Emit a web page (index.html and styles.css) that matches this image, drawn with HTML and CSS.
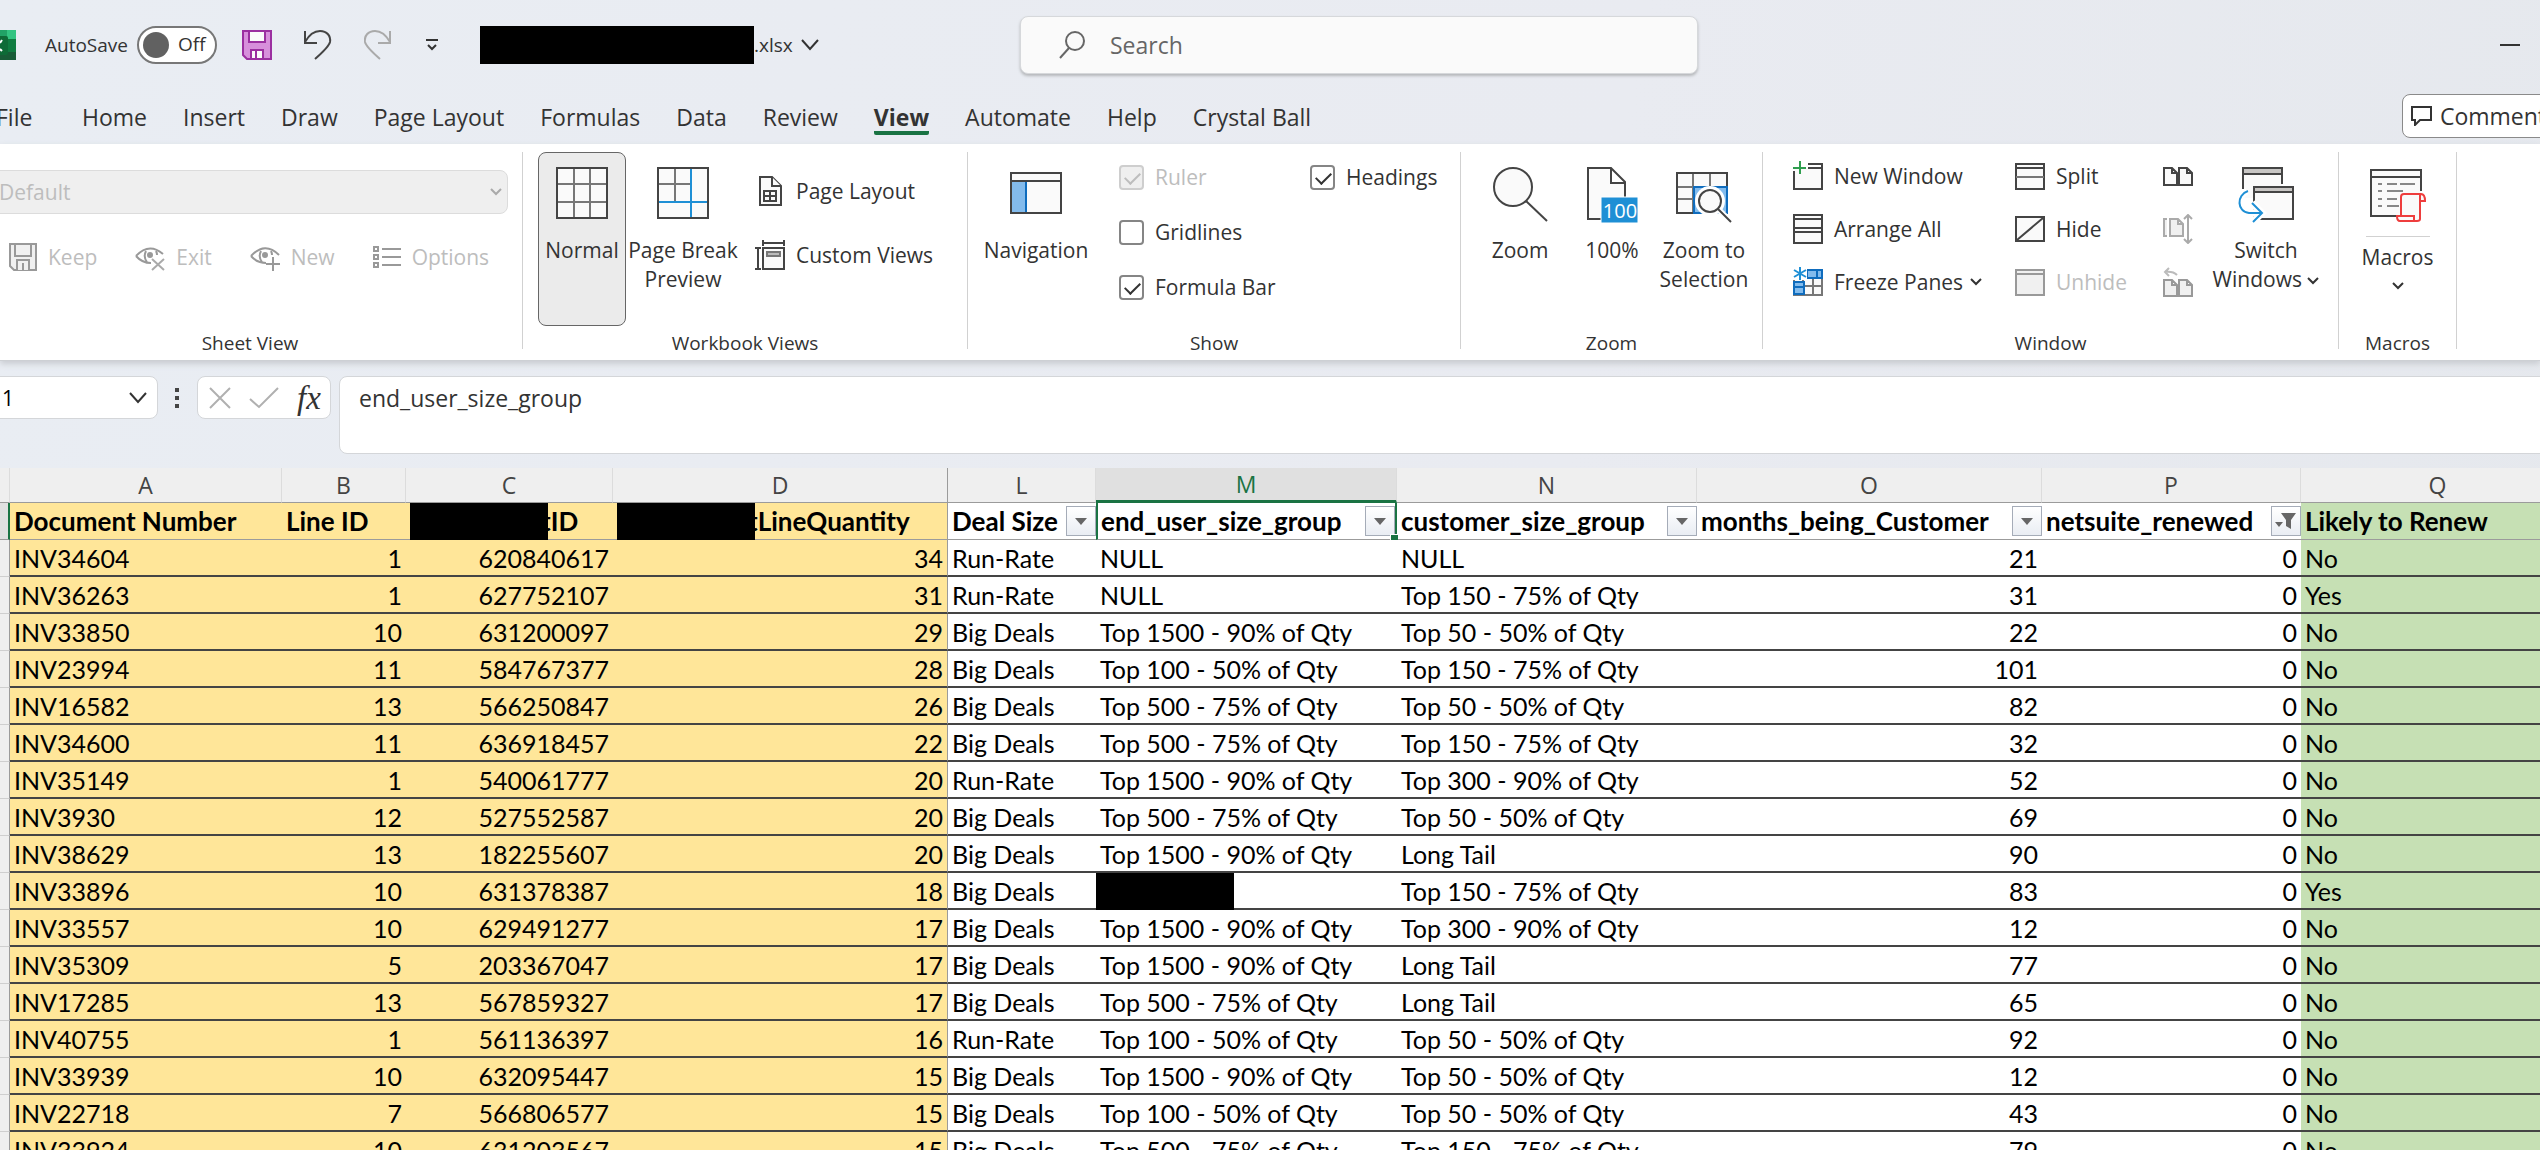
FILE: index.html
```html
<!DOCTYPE html>
<html lang="en">
<head>
    <meta charset="UTF-8" />
    <meta name="viewport" content="width=device-width, initial-scale=1" />
    <title>Excel - View</title>
    <link rel="stylesheet" href="styles.css">
</head>
<body>
<div class="app">

    <!-- title bar -->
    <header class="titlebar">
        <div class="title-left">
            <svg class="logo" width="16" height="30" viewBox="0 0 16 30"><path fill="#21a366" d="M0 0h16v10H0z"/><path fill="#33c481" d="M7 0h9v9H7z"/><path fill="#107c41" d="M0 9h16v21H0z"/><path fill="#185c37" d="M0 22h16v8H0z"/><path fill="#0e6b37" d="M0 6h6q2 0 2 2v15q0 2-2 2H0z"/><path stroke="#fff" stroke-width="2" d="M0 19L2 21M0 13L2 10"/></svg>
            <label class="autosave" for="autosave">AutoSave</label>
            <span class="toggle"><input type="checkbox" id="autosave"><span class="toggle-text">Off</span></span>
            <div class="quick">
                <button aria-label="Save"><svg width="30" height="30" viewBox="0 0 30 30"><path fill="#d78fdb" stroke="#9b2fa0" stroke-width="2" d="M1 1h28v28H5l-4-4z"/><path fill="#fafafa" stroke="#9b2fa0" stroke-width="2" d="M7 1h16v11H7zM9 29v-9h12v9zM14 20v9"/></svg></button>
                <button aria-label="Undo"><svg width="30" height="30" viewBox="0 0 30 30" fill="none" stroke="#444" stroke-width="2"><path d="M2 1v12h12M2 12C6 5 11 1 17 1c7 0 11 5 10 11-1 4-7 10-15 17"/></svg></button>
                <button aria-label="Redo"><svg width="30" height="30" viewBox="0 0 30 30" fill="none" stroke="#aaa" stroke-width="2"><path d="M26 1v12H14M26 12C22 5 17 1 11 1 4 1 0 6 1 12c1 4 7 10 15 17"/></svg></button>
                <button aria-label="Customize"><svg width="14" height="14" viewBox="0 0 14 14" fill="none" stroke="#333" stroke-width="2"><path d="M1 2h12M3 7l4 4 4-4"/></svg></button>
            </div>
            <div class="filename"><span class="redacted"></span>.xlsx
                <svg width="18" height="12" viewBox="0 0 18 12" fill="none" stroke="#333" stroke-width="2"><path d="M1 1l8 9 8-9"/></svg>
            </div>
        </div>
        <div class="search">
            <svg width="26" height="28" viewBox="0 0 26 28" fill="none" stroke="#666" stroke-width="2"><circle cx="16" cy="10" r="9"/><path d="M10 17L1 27"/></svg>
            <input type="text" placeholder="Search" aria-label="Search">
        </div>
        <button class="minimize" aria-label="Minimize"></button>
    </header>

    <nav class="tabs">
        <a href="#" class="file">File</a>
        <a href="#">Home</a>
        <a href="#">Insert</a>
        <a href="#">Draw</a>
        <a href="#">Page Layout</a>
        <a href="#">Formulas</a>
        <a href="#">Data</a>
        <a href="#">Review</a>
        <a href="#" class="active">View</a>
        <a href="#">Automate</a>
        <a href="#">Help</a>
        <a href="#">Crystal Ball</a>
        <button class="comments"><svg width="21" height="20" viewBox="0 0 21 20" fill="none" stroke="#333" stroke-width="2"><path d="M1 1h19v13H9l-5 5v-5H1z"/></svg>Comments</button>
    </nav>

    <!-- ribbon -->
    <section class="ribbon">
        <div class="group sheet-view">
            <div class="group-body">
                <div class="view-select">
                    <select disabled aria-label="Sheet view"><option>Default</option></select>
                    <svg width="12" height="8" viewBox="0 0 12 8" fill="none" stroke="#aaa" stroke-width="2"><path d="M1 1l5 5 5-5"/></svg>
                </div>
                <div class="view-actions">
                    <button class="small" disabled><svg width="28" height="28" viewBox="0 0 28 28" fill="#f0f0f0" stroke="#999" stroke-width="2"><path d="M1 1h26v26H5l-4-4z"/><path d="M6 1h16v12H6zM8 27V17h12v10M14 20v7"/></svg>Keep</button>
                    <button class="small" disabled><svg width="30" height="28" viewBox="0 0 30 28" fill="none" stroke="#999" stroke-width="2"><path d="M1 13Q14-1 28 11M1 13q6 7 15 7"/><path d="M11 8q-3 6 1 11M21 8q1 2 1 4"/><circle cx="15" cy="12" r="2" fill="#999"/><path stroke="#aaa" d="M17 16l12 11M29 16L17 27"/></svg>Exit</button>
                    <button class="small" disabled><svg width="30" height="28" viewBox="0 0 30 28" fill="none" stroke="#999" stroke-width="2"><path d="M1 13Q15-2 29 12M1 13q6 7 15 7"/><path d="M11 8q-3 6 1 11M21 8q1 2 1 4"/><circle cx="15" cy="12" r="2" fill="#999"/><path d="M23 14v14M16 21h14"/></svg>New</button>
                    <button class="small" disabled><svg width="28" height="24" viewBox="0 0 28 24" fill="none" stroke="#999" stroke-width="2"><path d="M1 2h4v4H1zM1 10h4v4H1zM1 18h4v4H1zM9 4h19M9 12h19M9 20h19"/></svg>Options</button>
                </div>
            </div>
            <div class="group-label">Sheet View</div>
        </div>

        <div class="group workbook-views">
            <div class="group-body">
                <button class="large selected">
                    <svg width="52" height="56" viewBox="0 0 52 56" fill="none"><path fill="#fafafa" d="M1 1h50v50H1z"/><path stroke="#777" stroke-width="2" d="M18 1v50M34 1v50M1 17h50M1 35h50"/><path stroke="#444" stroke-width="2" d="M1 1h50v50H1z"/></svg>
                    Normal
                </button>
                <button class="large">
                    <svg width="52" height="56" viewBox="0 0 52 56" fill="none"><path fill="#fafafa" d="M1 1h50v50H1z"/><path stroke="#777" stroke-width="2" d="M18 1v33M1 17h33"/><path stroke="#444" stroke-width="2" d="M1 1h50v50H1z"/><path stroke="#1e8fd5" stroke-width="2" d="M34 2v48M2 35h48"/></svg>
                    Page Break<br>Preview
                </button>
                <div class="stack">
                    <button class="small"><svg width="30" height="30" viewBox="0 0 30 30" fill="#fafafa" stroke="#444" stroke-width="2"><path d="M5 1h12l9 9v19H5z"/><path d="M17 1v9h9M9 15h12v10H9zM15 15v10M9 20h12"/></svg>Page Layout</button>
                    <button class="small"><svg width="30" height="30" viewBox="0 0 30 30" fill="#fafafa" stroke="#444" stroke-width="2"><path d="M8 8h21v21H8zM8 3h21M8 0v6M29 0v6M3 8v21M0 8h6M0 29h6"/><path fill="#bbb" stroke="#777" d="M12 12h13v4H12z"/></svg>Custom Views</button>
                </div>
            </div>
            <div class="group-label">Workbook Views</div>
        </div>

        <div class="group show">
            <div class="group-body">
                <button class="large">
                    <svg width="52" height="56" viewBox="0 0 52 56"><path fill="#fafafa" d="M1 6h50v40H1z"/><path fill="#83bbec" d="M2 15h14v31H2z"/><path stroke="#0f6cbd" stroke-width="2" d="M16 15v30"/><path fill="none" stroke="#444" stroke-width="2" d="M1 6h50v40H1zM1 14h50"/></svg>
                    Navigation
                </button>
                <div class="checks">
                    <label class="off"><input type="checkbox" checked disabled>Ruler</label>
                    <label><input type="checkbox" checked>Headings</label>
                    <label><input type="checkbox">Gridlines</label>
                    <span></span>
                    <label><input type="checkbox" checked>Formula Bar</label>
                </div>
            </div>
            <div class="group-label">Show</div>
        </div>

        <div class="group zoom">
            <div class="group-body">
                <button class="large">
                    <svg width="56" height="56" viewBox="0 0 56 56" stroke="#444" stroke-width="2"><circle fill="#fafafa" cx="21" cy="20" r="19"/><path d="M34 34l21 20"/></svg>
                    Zoom
                </button>
                <button class="large">
                    <svg width="52" height="56" viewBox="0 0 52 56"><path fill="#fafafa" stroke="#444" stroke-width="2" d="M2 1h23l14 14v37H2zM25 1v15h14"/><path fill="#1e8fd5" stroke="#fff" d="M15 30h37v26H15z"/><text x="34" y="51" text-anchor="middle" class="badge-text">100</text></svg>
                    100%
                </button>
                <button class="large">
                    <svg width="56" height="56" viewBox="0 0 56 56" fill="none"><path fill="#fafafa" stroke="#777" stroke-width="2" d="M1 6h50v40H1zM17 6v40M34 6v40M1 20h50M1 32h50"/><path stroke="#444" stroke-width="2" d="M51 20V6H1v40h18"/><path fill="#83bbec" stroke="#0f6cbd" stroke-width="2" d="M18 20h33v26H18z"/><circle cx="34" cy="34" r="15" fill="#fff"/><path stroke="#fff" stroke-width="6" d="M42 42l13 13"/><circle cx="34" cy="34" r="11" fill="#fafafa" stroke="#444" stroke-width="2"/><path stroke="#444" stroke-width="2" d="M42 42l13 13"/></svg>
                    Zoom to<br>Selection
                </button>
            </div>
            <div class="group-label">Zoom</div>
        </div>

        <div class="group window">
            <div class="group-body">
                <div class="window-grid">
                    <button class="small"><svg width="30" height="30" viewBox="0 0 30 30" fill="none" stroke="#444" stroke-width="2"><path fill="#fafafa" stroke="none" d="M1 7h28v21H1z"/><path d="M15 3h14v25H1V10M15 7h14"/><path stroke="#2f9e4f" d="M0 7h13M7 0v13"/></svg>New Window</button>
                    <button class="small"><svg width="30" height="30" viewBox="0 0 30 30" fill="#fafafa" stroke="#444" stroke-width="2"><path d="M1 3h28v25H1zM1 7h28"/><path stroke="#777" d="M1 16h28"/></svg>Split</button>
                    <button class="small" aria-label="View Side by Side"><svg width="30" height="30" viewBox="0 0 30 30" fill="#fafafa" stroke="#444" stroke-width="2"><path d="M1 7h8l5 5v12H1zM16 7h8l5 5v12H16zM9 7v5h5M24 7v5h5"/></svg></button>
                    <button class="small"><svg width="30" height="30" viewBox="0 0 30 30" fill="#fafafa" stroke="#444" stroke-width="2"><path d="M1 1h28v28H1zM1 5h28M1 14h28M1 18h28"/></svg>Arrange All</button>
                    <button class="small"><svg width="30" height="30" viewBox="0 0 30 30" fill="#fafafa" stroke="#444" stroke-width="2"><path d="M1 3h28v24H1zM2 26L28 4"/></svg>Hide</button>
                    <button class="small" disabled aria-label="Synchronous Scrolling"><svg width="30" height="30" viewBox="0 0 30 30" fill="#f0f0f0" stroke="#aaa" stroke-width="2"><path d="M7 5h8l5 5v12H7zM15 5v5h5M4 5H1v17h3"/><path fill="none" d="M25 1v28M21 5l4-4 4 4M21 25l4 4 4-4"/></svg></button>
                    <button class="small"><svg width="30" height="30" viewBox="0 0 30 30" stroke-width="2"><path fill="#fafafa" stroke="#777" d="M1 3h28v25H1zM10 11v17M20 11v17M1 19h28"/><path fill="#83bbec" stroke="#0f6cbd" d="M14 3h15v8H14zM24 3v8M1 15h10v12H1zM1 20h10"/><path fill="#fff" d="M0 0h14v13H0z"/><path stroke="#1e8fd5" d="M7 0v13M1 3l12 7M13 3L1 10"/></svg>Freeze Panes <svg class="chevron" width="12" height="8" viewBox="0 0 12 8"><path d="M1 1l5 5 5-5"/></svg></button>
                    <button class="small" disabled><svg width="30" height="30" viewBox="0 0 30 30" fill="#f0f0f0" stroke="#999" stroke-width="2"><path d="M1 3h28v25H1zM1 7h28"/></svg>Unhide</button>
                    <button class="small" disabled aria-label="Reset Window Position"><svg width="30" height="30" viewBox="0 0 30 30" fill="#f0f0f0" stroke="#999" stroke-width="2"><path d="M1 13h8l5 5v11H1zM16 13h8l5 5v11H16zM9 13v5h5M24 13v5h5"/><path fill="none" stroke="#bbb" d="M14 8Q10 4 2 5M6 1L2 5l4 4"/></svg></button>
                </div>
                <button class="large">
                    <svg width="56" height="56" viewBox="0 0 56 56" fill="#fafafa" stroke="#444" stroke-width="2"><path stroke="none" d="M5 1h39v30H5z"/><path fill="#c8c6c4" d="M5 1h39v6H5z"/><path fill="none" d="M5 22V1h39v16"/><path d="M16 20h39v32H16z"/><path fill="#c8c6c4" d="M16 20h39v5H16z"/><path fill="none" stroke="#fff" stroke-width="7" d="M9 24C-2 30-1 45 11 46h12M14 36l10 10-9 9"/><path fill="none" stroke="#1e8fd5" d="M10 24C-2 28-1 45 11 46h12M14 36l10 10-9 9"/></svg>
                    Switch<br><span>Windows <svg class="chevron" width="12" height="8" viewBox="0 0 12 8"><path d="M1 1l5 5 5-5"/></svg></span>
                </button>
            </div>
            <div class="group-label">Window</div>
        </div>

        <div class="group macros">
            <div class="group-body">
                <button class="large">
                    <svg width="56" height="56" viewBox="0 0 56 56" fill="none" stroke="#444" stroke-width="2"><path fill="#fafafa" stroke="none" d="M1 3h50v46H1z"/><path d="M51 24V3H1v46h26M1 10h50"/><path stroke="#888" d="M8 17h4M17 17h10M30 17h15M8 24h4M17 24h16M8 32h4M17 32h10M8 39h4M17 39h12"/><path fill="#fafafa" stroke="#ee3d3d" d="M31 49V30q0-3 3-3h17q4 0 4 7h-5v18q0 2-3 2H30q-3 0-3-5h17v5M50 34v-7"/></svg>
                    <span class="split-line"></span>
                    Macros
                    <svg class="chevron" width="12" height="8" viewBox="0 0 12 8"><path d="M1 1l5 5 5-5"/></svg>
                </button>
            </div>
            <div class="group-label">Macros</div>
        </div>
    </section>

    <!-- formula bar -->
    <section class="formula-bar">
        <div class="name-box">
            <input type="text" value="1" aria-label="Name box">
            <svg width="18" height="12" viewBox="0 0 18 12" fill="none" stroke="#333" stroke-width="2"><path d="M1 1l8 9 8-9"/></svg>
        </div>
        <svg class="dots" width="4" height="20" viewBox="0 0 4 20" fill="#444"><path d="M0 0h4v4H0zM0 8h4v4H0zM0 16h4v4H0z"/></svg>
        <div class="formula-buttons">
            <button aria-label="Cancel"><svg width="22" height="22" viewBox="0 0 22 22" stroke="#b0b0b0" stroke-width="2"><path d="M1 1l20 20M21 1L1 21"/></svg></button>
            <button aria-label="Enter"><svg width="30" height="22" viewBox="0 0 30 22" fill="none" stroke="#b0b0b0" stroke-width="2"><path d="M1 12l9 8L29 1"/></svg></button>
            <button class="fx">fx</button>
        </div>
        <textarea class="formula" aria-label="Formula">end_user_size_group</textarea>
    </section>

    <!-- grid -->
    <main class="sheet">
        <table>
            <colgroup>
                <col class="c-row"><col class="c-a"><col class="c-b"><col class="c-c"><col class="c-d"><col class="c-l"><col class="c-m"><col class="c-n"><col class="c-o"><col class="c-p"><col class="c-q">
            </colgroup>
            <thead>
                <tr>
                    <th class="corner"></th><th>A</th><th>B</th><th>C</th><th>D</th><th>L</th><th class="current">M</th><th>N</th><th>O</th><th>P</th><th>Q</th>
                </tr>
            </thead>
            <tbody>
                <tr class="titles">
                    <td></td>
                    <td>Document Number</td>
                    <td>Line ID</td>
                    <td><div class="cell"><span class="redacted"></span>tID</div></td>
                    <td><div class="cell"><span class="redacted"></span>tLineQuantity</div></td>
                    <td><div class="cell">Deal Size<button class="filter" aria-label="Filter"></button></div></td>
                    <td class="current"><div class="cell">end_user_size_group<button class="filter" aria-label="Filter"></button></div></td>
                    <td><div class="cell">customer_size_group<button class="filter" aria-label="Filter"></button></div></td>
                    <td><div class="cell">months_being_Customer<button class="filter" aria-label="Filter"></button></div></td>
                    <td><div class="cell">netsuite_renewed<button class="filter on" aria-label="Filter"><svg width="22" height="18" viewBox="0 0 22 18" fill="#666"><path d="M6 1h15l-5 7v9l-5-3V8zM0 10h8l-4 5z"/></svg></button></div></td>
                    <td>Likely to Renew</td>
                </tr>
                <tr><td></td><td>INV34604</td><td>1</td><td>620840617</td><td>34</td><td>Run-Rate</td><td>NULL</td><td>NULL</td><td>21</td><td>0</td><td>No</td></tr>
                <tr><td></td><td>INV36263</td><td>1</td><td>627752107</td><td>31</td><td>Run-Rate</td><td>NULL</td><td>Top 150 - 75% of Qty</td><td>31</td><td>0</td><td>Yes</td></tr>
                <tr><td></td><td>INV33850</td><td>10</td><td>631200097</td><td>29</td><td>Big Deals</td><td>Top 1500 - 90% of Qty</td><td>Top 50 - 50% of Qty</td><td>22</td><td>0</td><td>No</td></tr>
                <tr><td></td><td>INV23994</td><td>11</td><td>584767377</td><td>28</td><td>Big Deals</td><td>Top 100 - 50% of Qty</td><td>Top 150 - 75% of Qty</td><td>101</td><td>0</td><td>No</td></tr>
                <tr><td></td><td>INV16582</td><td>13</td><td>566250847</td><td>26</td><td>Big Deals</td><td>Top 500 - 75% of Qty</td><td>Top 50 - 50% of Qty</td><td>82</td><td>0</td><td>No</td></tr>
                <tr><td></td><td>INV34600</td><td>11</td><td>636918457</td><td>22</td><td>Big Deals</td><td>Top 500 - 75% of Qty</td><td>Top 150 - 75% of Qty</td><td>32</td><td>0</td><td>No</td></tr>
                <tr><td></td><td>INV35149</td><td>1</td><td>540061777</td><td>20</td><td>Run-Rate</td><td>Top 1500 - 90% of Qty</td><td>Top 300 - 90% of Qty</td><td>52</td><td>0</td><td>No</td></tr>
                <tr><td></td><td>INV3930</td><td>12</td><td>527552587</td><td>20</td><td>Big Deals</td><td>Top 500 - 75% of Qty</td><td>Top 50 - 50% of Qty</td><td>69</td><td>0</td><td>No</td></tr>
                <tr><td></td><td>INV38629</td><td>13</td><td>182255607</td><td>20</td><td>Big Deals</td><td>Top 1500 - 90% of Qty</td><td>Long Tail</td><td>90</td><td>0</td><td>No</td></tr>
                <tr><td></td><td>INV33896</td><td>10</td><td>631378387</td><td>18</td><td>Big Deals</td><td class="hidden-value"><span class="redacted"></span></td><td>Top 150 - 75% of Qty</td><td>83</td><td>0</td><td>Yes</td></tr>
                <tr><td></td><td>INV33557</td><td>10</td><td>629491277</td><td>17</td><td>Big Deals</td><td>Top 1500 - 90% of Qty</td><td>Top 300 - 90% of Qty</td><td>12</td><td>0</td><td>No</td></tr>
                <tr><td></td><td>INV35309</td><td>5</td><td>203367047</td><td>17</td><td>Big Deals</td><td>Top 1500 - 90% of Qty</td><td>Long Tail</td><td>77</td><td>0</td><td>No</td></tr>
                <tr><td></td><td>INV17285</td><td>13</td><td>567859327</td><td>17</td><td>Big Deals</td><td>Top 500 - 75% of Qty</td><td>Long Tail</td><td>65</td><td>0</td><td>No</td></tr>
                <tr><td></td><td>INV40755</td><td>1</td><td>561136397</td><td>16</td><td>Run-Rate</td><td>Top 100 - 50% of Qty</td><td>Top 50 - 50% of Qty</td><td>92</td><td>0</td><td>No</td></tr>
                <tr><td></td><td>INV33939</td><td>10</td><td>632095447</td><td>15</td><td>Big Deals</td><td>Top 1500 - 90% of Qty</td><td>Top 50 - 50% of Qty</td><td>12</td><td>0</td><td>No</td></tr>
                <tr><td></td><td>INV22718</td><td>7</td><td>566806577</td><td>15</td><td>Big Deals</td><td>Top 100 - 50% of Qty</td><td>Top 50 - 50% of Qty</td><td>43</td><td>0</td><td>No</td></tr>
                <tr><td></td><td>INV33924</td><td>10</td><td>631203567</td><td>15</td><td>Big Deals</td><td>Top 500 - 75% of Qty</td><td>Top 150 - 75% of Qty</td><td>79</td><td>0</td><td>No</td></tr>
            </tbody>
        </table>
    </main>

</div>
</body>
</html>
```
FILE: styles.css
```css
* {
    box-sizing: border-box;
}

body {
    margin: 0;
    font-family: "Open Sans", "Noto Sans", sans-serif;
    font-size: 21px;
    color: #333;
    background: #e9ecf2;
}

button {
    font: inherit;
    color: inherit;
    background: none;
    border: none;
    padding: 0;
}

svg {
    display: block;
    flex: none;
}

.app {
    height: 100vh;
    overflow: hidden;
    display: flex;
    flex-direction: column;
    background: linear-gradient(100deg, #e9edf3, #e9ebf1 60%, #e5e8ed);
}

/* title bar */
.titlebar {
    flex: none;
    height: 90px;
    display: grid;
    grid-template-columns: 1020fr 678fr 842fr;
    align-items: center;
}

.title-left {
    display: flex;
    align-items: center;
    white-space: nowrap;
}

.autosave {
    width: 92px;
    margin-left: 29px;
    font-size: 19px;
}

.toggle {
    position: relative;
    width: 80px;
    height: 38px;
}

.toggle input {
    appearance: none;
    margin: 0;
    width: 80px;
    height: 38px;
    background: #fff;
    border: 2px solid #777;
    border-radius: 19px;
}

.toggle input::before {
    content: "";
    display: block;
    width: 26px;
    height: 26px;
    margin: 4px;
    border-radius: 50%;
    background: #616161;
}

.toggle-text {
    position: absolute;
    left: 41px;
    top: 5px;
    font-size: 19px;
    pointer-events: none;
}

.quick {
    display: flex;
    align-items: center;
    gap: 31px;
    margin-left: 25px;
}

.redacted {
    display: inline-block;
    flex: none;
    width: 138px;
    height: 38px;
    background: #000;
}

.filename {
    display: flex;
    align-items: center;
    margin-left: 41px;
    font-size: 19px;
}

.filename .redacted {
    width: 274px;
}

.filename svg {
    margin-left: 8px;
}

.search {
    display: flex;
    align-items: center;
    gap: 23px;
    height: 58px;
    padding-left: 38px;
    background: #fafafa;
    border: 1px solid #d6d8db;
    border-radius: 8px;
    box-shadow: 0 2px 3px #b5b7ba;
}

.search input {
    flex: 1;
    border: none;
    background: none;
    font: inherit;
    font-size: 23px;
}

.search input::placeholder {
    color: #666;
}

.minimize {
    justify-self: end;
    width: 20px;
    height: 2px;
    margin-right: 20px;
    background: #333;
}

/* tabs */
.tabs {
    flex: none;
    height: 54px;
    display: flex;
    align-items: flex-start;
    gap: 36px;
    white-space: nowrap;
    font-size: 23px;
    line-height: 28px;
}

.tabs a {
    margin-top: 13px;
    color: #333;
    text-decoration: none;
}

.tabs .file {
    width: 46px;
    text-indent: -4px;
}

.tabs .active {
    font-weight: 700;
    border-bottom: 4px solid #1a7343;
    border-radius: 2px;
}

.comments {
    display: flex;
    align-items: center;
    gap: 8px;
    height: 44px;
    margin: 4px -42px 0 auto;
    padding: 0 24px 0 8px;
    background: #fff;
    border: 1px solid #8a8a8a;
    border-radius: 8px;
}

/* ribbon */
.ribbon {
    flex: none;
    height: 217px;
    display: flex;
    padding: 8px 0 11px;
    background: #fff;
    border-bottom: 1px solid #cdd0d4;
    box-shadow: 0 3px 6px #c9ccd1;
    line-height: 29px;
    white-space: nowrap;
}

.group {
    flex: none;
    display: flex;
    flex-direction: column;
    border-right: 1px solid #d1d1d1;
}

.group-body {
    flex: 1;
    display: flex;
    align-items: flex-start;
}

.group-label {
    font-size: 19px;
    line-height: 12px;
    text-align: center;
}

/* the first group runs past the left edge of the window */
.sheet-view {
    width: 545px;
    margin-left: -22px;
}

.workbook-views {
    width: 445px;
}

.show {
    width: 493px;
}

.zoom {
    width: 302px;
}

.window {
    width: 576px;
}

.macros {
    width: 118px;
}

.large {
    display: flex;
    flex-direction: column;
    align-items: center;
    height: 174px;
    padding-top: 15px;
    text-align: center;
}

.large > svg:first-child {
    margin-bottom: 13px;
}

.large span svg {
    display: inline-block;
    vertical-align: middle;
}

.chevron {
    fill: none;
    stroke: #333;
    stroke-width: 2px;
}

.small {
    display: flex;
    align-items: center;
    gap: 11px;
    height: 30px;
}

.small:disabled {
    color: #bdbdbd;
}

.small .chevron {
    margin-left: -4px;
}

.sheet-view .group-body {
    flex-direction: column;
}

.view-select {
    display: flex;
    align-items: center;
    width: 518px;
    height: 44px;
    margin: 18px 0 28px 12px;
    padding-right: 5px;
    background: #efefef;
    border: 1px solid #dcdcdc;
    border-radius: 8px;
}

.view-select select {
    flex: 1;
    appearance: none;
    border: none;
    background: none;
    padding: 0 8px;
    font: inherit;
    color: #bdbdbd;
    opacity: 1;
}

.view-actions {
    display: flex;
    gap: 38px;
    padding-left: 31px;
}

.workbook-views .group-body {
    padding-left: 15px;
}

.workbook-views .large {
    width: 114px;
}

.workbook-views .selected {
    width: 88px;
    background: #ebebeb;
    border: 1px solid #666;
    border-radius: 8px;
    padding-top: 14px;
}

.stack {
    display: flex;
    flex-direction: column;
    gap: 34px;
    padding: 24px 0 0 15px;
}

.show .group-body {
    padding-left: 10px;
}

.show .large {
    width: 116px;
}

.checks {
    display: grid;
    grid-template-columns: 191px auto;
    row-gap: 26px;
    padding: 11px 0 0 25px;
}

.checks label {
    display: flex;
    align-items: center;
    gap: 11px;
}

.checks .off {
    color: #bdbdbd;
}

.checks input {
    appearance: none;
    width: 25px;
    height: 25px;
    margin: 0;
    border: 2px solid #858585;
    border-radius: 4px;
    background: #fff;
}

.checks input:checked::before {
    content: "";
    display: block;
    width: 13px;
    height: 7px;
    margin: 5px 4px;
    border: solid #333;
    border-width: 0 0 2px 2px;
    transform: rotate(-45deg);
}

.checks input:disabled {
    background: #efefef;
    border-color: #cecece;
}

.checks input:disabled::before {
    border-color: #bdbdbd;
}

.zoom .group-body {
    padding-left: 13px;
}

.zoom .large {
    width: 92px;
}

.badge-text {
    fill: #fff;
    font-size: 20px;
}

.window .group-body {
    padding-left: 30px;
}

.window-grid {
    display: grid;
    grid-template-columns: 222px 148px 32px;
    row-gap: 23px;
    padding-top: 9px;
}

.window .large {
    width: 142px;
}

.macros .large {
    width: 117px;
}

.split-line {
    width: 64px;
    height: 1px;
    margin-bottom: 6px;
    background: #d1d1d1;
}

.macros .chevron {
    margin-top: 10px;
}

/* formula bar */
.formula-bar {
    flex: none;
    display: flex;
    align-items: flex-start;
    height: 107px;
    padding-top: 15px;
}

.name-box,
.formula-buttons {
    display: flex;
    align-items: center;
    height: 43px;
    background: #fff;
    border: 1px solid #d4d6d9;
    border-radius: 8px;
}

.name-box {
    width: 168px;
    margin-left: -10px;
    padding: 0 10px;
}

.name-box input {
    flex: 1;
    min-width: 0;
    border: none;
    padding: 0 1px;
    font: inherit;
}

.dots {
    margin: 12px 18px 0 17px;
}

.formula-buttons {
    width: 134px;
    padding-left: 11px;
    gap: 18px;
}

.fx {
    font-family: "Liberation Serif", serif;
    font-style: italic;
    font-size: 33px;
    line-height: 36px;
}

.formula {
    flex: 1;
    height: 78px;
    margin: 0 -10px 0 8px;
    padding: 6px 19px;
    border: 1px solid #d4d6d9;
    border-radius: 8px;
    background: #fff;
    color: #333;
    font: inherit;
    font-size: 23px;
    line-height: 30px;
    resize: none;
}

/* grid */
.sheet {
    flex: 1;
    min-height: 0;
    overflow: hidden;
    background: #fff;
}

.sheet table {
    width: 2575px;
    table-layout: fixed;
    border-collapse: separate;
    border-spacing: 0;
    font-family: Lato, sans-serif;
    font-size: 25px;
    line-height: 34px;
    color: #000;
    white-space: nowrap;
}

.c-row { width: 10px; }
.c-a { width: 272px; }
.c-b { width: 124px; }
.c-c { width: 207px; }
.c-d { width: 335px; }
.c-l { width: 148px; }
.c-m { width: 301px; }
.c-n { width: 300px; }
.c-o { width: 345px; }
.c-p { width: 259px; }
.c-q { width: 274px; }

.sheet th {
    height: 35px;
    padding: 0;
    background: #efefef;
    border-right: 1px solid #dcdcdc;
    border-bottom: 1px solid #9b9b9b;
    font-family: "Open Sans", sans-serif;
    font-size: 23px;
    font-weight: 400;
    line-height: 34px;
    color: #444;
}

.sheet th:nth-child(5) {
    border-right-color: #9b9b9b;
}

.sheet th.current {
    background: #e0e0e0;
    border-bottom: 3px solid #1a7343;
    line-height: 32px;
    color: #1a7343;
}

.sheet td {
    height: 37px;
    padding: 0 4px;
    border-bottom: 2px solid #444;
}

.sheet td:first-child {
    background: #efefef;
    border-right: 1px solid #9b9b9b;
    border-bottom: 1px solid #cfcfcf;
    padding: 0;
}

.sheet td:nth-child(2),
.sheet td:nth-child(3),
.sheet td:nth-child(4),
.sheet td:nth-child(5) {
    background: #ffe699;
}

.sheet td:nth-child(5) {
    border-right: 1px solid #9b9b9b;
}

.sheet td:nth-child(11) {
    background: #c6e0b4;
}

.sheet td:nth-child(3),
.sheet td:nth-child(4),
.sheet td:nth-child(5),
.sheet td:nth-child(9),
.sheet td:nth-child(10) {
    text-align: right;
}

.sheet .titles td {
    font-weight: 700;
    font-size: 26px;
    line-height: 36px;
    text-align: left;
    border-bottom: 1px solid #9b9b9b;
}

.sheet .titles td:first-child {
    background: #e0e0e0;
    border-right: 2px solid #1a7343;
}

.sheet .titles .current {
    position: relative;
    border-left: 2px solid #1a7343;
    border-right: 2px solid #1a7343;
    padding-left: 3px;
}

/* fill handle */
.sheet .titles .current::after {
    content: "";
    position: absolute;
    right: -3px;
    bottom: -1px;
    width: 7px;
    height: 5px;
    background: #1a7343;
    border: solid #fff;
    border-width: 1px 0 0 1px;
}

.cell {
    display: flex;
    align-items: center;
    height: 36px;
    margin-right: -4px;
}

/* the box covers most of the first letter behind it */
.cell .redacted {
    position: relative;
    height: 37px;
    margin-right: -7px;
}

.hidden-value .redacted {
    display: block;
    height: 37px;
    margin: 0 0 -2px -4px;
}

.filter {
    flex: none;
    width: 30px;
    height: 30px;
    margin-left: auto;
    background: linear-gradient(#fff, #e9edf3);
    border: 1px solid #a5acb8;
}

.filter::before {
    content: "";
    display: block;
    width: 0;
    margin: 0 auto;
    border: 6px solid transparent;
    border-top: 7px solid #666;
    border-bottom: none;
}

.filter.on::before {
    display: none;
}

.filter svg {
    margin: 0 auto;
}
```
